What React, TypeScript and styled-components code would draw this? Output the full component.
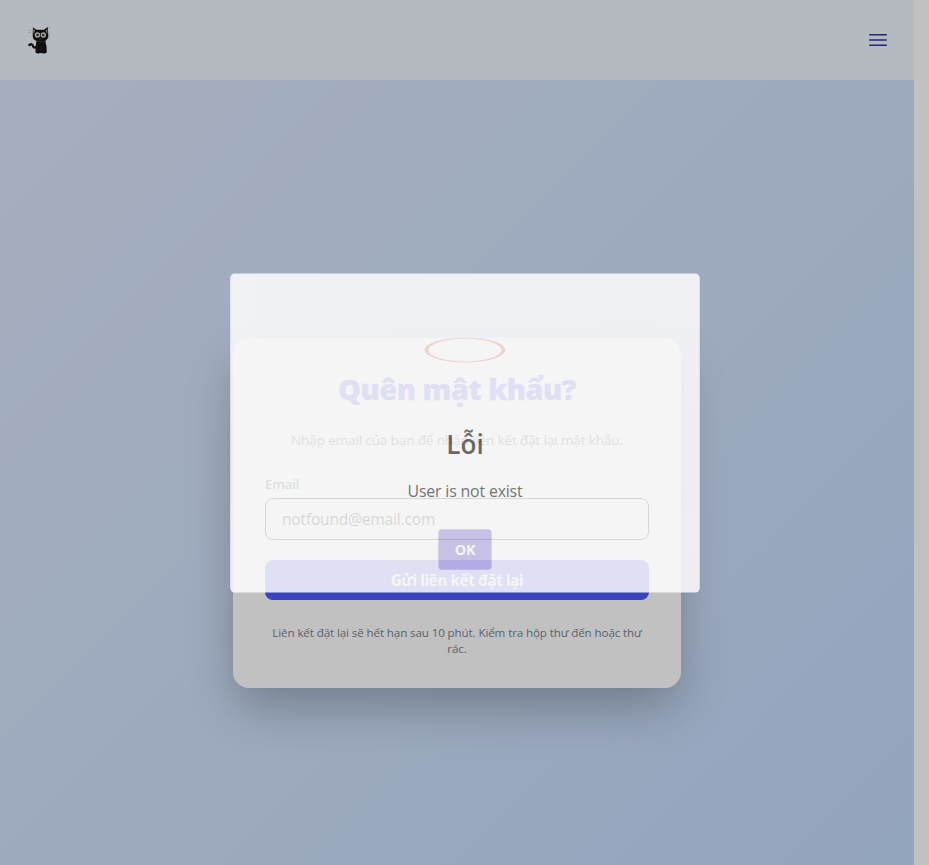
import React from 'react';
import styled, { createGlobalStyle } from 'styled-components';

const GlobalStyle = createGlobalStyle`
  * { box-sizing: border-box; }
  html, body { margin: 0; padding: 0; height: 100%; overflow: hidden; }
  body { font-family: "Segoe UI", "Open Sans", "Noto Sans", sans-serif; }
`;

const Screen = styled.div`
  position: relative;
  display: flex;
  width: 100%;
  height: 865px;
  overflow: hidden;
`;

const Page = styled.div`
  flex: 1;
  display: flex;
  flex-direction: column;
  background: linear-gradient(135deg, #dde7fb, #d1e2fb 45%, #c4dafb);
`;

const ScrollTrack = styled.div`
  width: 15px;
  background: #fff;
`;

const Header = styled.header`
  flex: none;
  height: 80px;
  padding: 0 24px;
  display: flex;
  align-items: center;
  justify-content: space-between;
  background: #eff5fe;
`;

const MenuButton = styled.button`
  display: flex;
  padding: 0;
  border: 0;
  background: none;
  color: #2c3692;
`;

const Main = styled.main`
  flex: none;
  height: 865px;
  display: flex;
  align-items: center;
  justify-content: center;
`;

const Card = styled.form`
  width: 448px;
  height: 350px;
  padding: 32px;
  border-radius: 16px;
  background: #fff;
  box-shadow: 0 22px 50px -5px rgba(0, 0, 0, 0.28);
`;

const Title = styled.h1`
  margin: 1px 0 23px;
  font-size: 28.8px;
  line-height: 36px;
  font-weight: 800;
  letter-spacing: -0.46px;
  text-align: center;
  color: #4d59f9;
  -webkit-text-stroke: 0.4px currentColor;
`;

const Lead = styled.p`
  margin: 0 0 24px;
  font-size: 13.5px;
  line-height: 20px;
  letter-spacing: -0.12px;
  text-align: center;
  white-space: nowrap;
  color: #4b5563;
`;

const Label = styled.label`
  display: block;
  margin-bottom: 4px;
  font-size: 13.2px;
  line-height: 20px;
  font-weight: 600;
  letter-spacing: -0.1px;
  color: #374151;
`;

const Input = styled.input`
  display: block;
  width: 100%;
  height: 42px;
  margin-bottom: 20px;
  padding: 8px 16px;
  border: 1px solid #0b0f18;
  border-radius: 8px;
  background: #fff;
  font: 400 15.5px/24px "Segoe UI", "Open Sans", sans-serif;
  letter-spacing: -0.16px;
  color: #000;
`;

const Submit = styled.button`
  display: block;
  width: 100%;
  height: 40px;
  margin-bottom: 24px;
  padding: 1px 0 0;
  border: 0;
  border-radius: 8px;
  background: #4d59f9;
  font: 700 15.2px/24px "Segoe UI", "Open Sans", sans-serif;
  letter-spacing: -0.38px;
  color: #fff;
`;

const Hint = styled.p`
  margin: 0;
  padding-top: 1px;
  font-size: 11.6px;
  line-height: 16px;
  letter-spacing: -0.113px;
  text-align: center;
  color: #7b8294;
`;

const Backdrop = styled.div`
  position: absolute;
  inset: 0;
  display: flex;
  align-items: center;
  justify-content: center;
  background: rgba(0, 0, 0, 0.243);
`;

const Popup = styled.div`
  display: flex;
  flex-direction: column;
  align-items: center;
  width: 512px;
  height: 348px;
  border-radius: 5px;
  background: #fff;
  opacity: 0.84;
  transform: scale(0.917);
`;

const ErrorRing = styled.div`
  width: 88px;
  height: 27px;
  margin-top: 70px;
  border: solid #f27474;
  border-width: 1.3px 4px;
  border-radius: 50%;
  opacity: 0.3;
`;

const PopupTitle = styled.h2`
  margin: 67px 0 0;
  font-size: 28.5px;
  line-height: 44px;
  font-weight: 600;
  color: #595959;
`;

const PopupText = styled.p`
  margin: 17px 0 0;
  font-size: 17.3px;
  line-height: 26px;
  letter-spacing: -0.17px;
  color: #666;
`;

const ConfirmButton = styled.button`
  width: 58px;
  height: 44px;
  margin-top: 28px;
  padding: 0;
  border: 0;
  border-radius: 4px;
  background: #cac1ee;
  font: 700 15.6px/24px "Segoe UI", "Open Sans", sans-serif;
  letter-spacing: -0.2px;
  color: #fff;
`;

const CatLogo = () => (
  <svg width="32" height="32" viewBox="0 0 32 32" aria-label="Logo">
    <path d="M12.500 23Q9.500 24.500 8.800 21.500Q8.200 19.300 5.300 21" fill="none" stroke="#191919" strokeWidth="2.300" strokeLinecap="round" />
    <path d="M8.900 3.200L12.500 5.800H20L23.800 3L24.300 11Q24.300 15 21.600 16.500Q21.300 19 22.500 22L22.800 28.500Q21 30 17 29Q13 30 11.500 28.500Q11.300 22 12.500 16.800Q8.900 16 8.700 12Z" fill="#151515" />
    <path d="M9.100 4.500L9.200 10L11.200 7ZM23.500 4.500L23.400 10L21.400 7Z" fill="#8e8b8a" />
    <circle cx="13.400" cy="11" r="2.700" fill="#ded9d4" />
    <circle cx="19.300" cy="11" r="2.700" fill="#ded9d4" />
    <circle cx="13.500" cy="11" r="1.300" fill="#343434" />
    <circle cx="19.200" cy="11" r="1.300" fill="#343434" />
    <path d="M15 14.600L16.300 15.200L17.600 14.600" fill="none" stroke="#63504c" strokeWidth=".7" />
    <path d="M12.800 17.500H21" stroke="#403630" strokeWidth=".7" />
    <path d="M17 22V28.500" stroke="#3d3d3d" strokeWidth=".5" />
    <g fill="#cb8c9d">
      <circle cx="5.800" cy="6.500" r=".6" />
      <circle cx="5.500" cy="8.500" r=".5" />
      <circle cx="25.700" cy="3.600" r=".6" />
    </g>
    <path d="M23.800 12.500L26.200 12M23.800 14L25.800 14.500" stroke="#777" strokeWidth=".4" />
  </svg>
);

const MenuIcon = () => (
  <svg width="24" height="24" viewBox="0 0 24 24" fill="none" stroke="currentColor" strokeWidth="1.5" strokeLinecap="round">
    <path d="M3.75 6.75h16.5M3.75 12h16.5m-16.5 5.25h16.5" />
  </svg>
);

export default function App() {
  return (
    <>
      <GlobalStyle />
      <Screen>
        <Page>
          <Header>
            <CatLogo />
            <MenuButton type="button" aria-label="Menu">
              <MenuIcon />
            </MenuButton>
          </Header>
          <Main>
            <Card>
              <Title>Quên mật khẩu?</Title>
              <Lead>Nhập email của bạn để nhận liên kết đặt lại mật khẩu.</Lead>
              <Label htmlFor="email">Email</Label>
              <Input id="email" type="text" defaultValue="notfound@email.com" />
              <Submit type="button">Gửi liên kết đặt lại</Submit>
              <Hint>Liên kết đặt lại sẽ hết hạn sau 10 phút. Kiểm tra hộp thư đến hoặc thư rác.</Hint>
            </Card>
          </Main>
        </Page>
        <ScrollTrack />
        <Backdrop>
          <Popup role="dialog">
            <ErrorRing />
            <PopupTitle>Lỗi</PopupTitle>
            <PopupText>User is not exist</PopupText>
            <ConfirmButton type="button">OK</ConfirmButton>
          </Popup>
        </Backdrop>
      </Screen>
    </>
  );
}
